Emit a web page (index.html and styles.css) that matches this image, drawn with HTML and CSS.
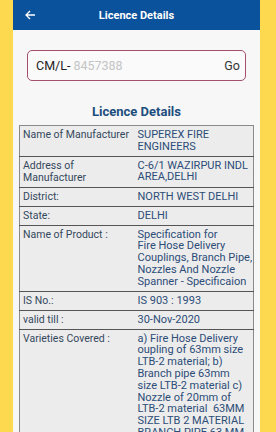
FILE: index.html
```html
<!DOCTYPE html>
<html lang="en">
<head>
    <meta charset="UTF-8">
    <meta name="viewport" content="width=device-width, initial-scale=1.0">
    <title>Licence Details</title>
    <link rel="stylesheet" href="styles.css">
</head>
<body>
    <div class="screen">
        <header class="appbar">
            <span class="back">
                <svg width="11" height="10" viewBox="0 0 11 10"><path d="M10 5H1.5M5 1L1 5l4 4" fill="none" stroke="#fff" stroke-width="1.3"/></svg>
            </span>
            <span class="title">Licence Details</span>
        </header>

        <form class="search">
            <span class="prefix">CM/L-</span>
            <input type="text" placeholder="8457388">
            <button type="button">Go</button>
        </form>

        <h2>Licence Details</h2>

        <table class="details">
            <colgroup><col class="c1"><col class="c2"></colgroup>
            <tr><td>Name of Manufacturer</td><td>SUPEREX FIRE ENGINEERS</td></tr>
            <tr><td>Address of Manufacturer</td><td>C-6/1 WAZIRPUR INDL AREA,DELHI</td></tr>
            <tr><td>District:</td><td>NORTH WEST DELHI</td></tr>
            <tr><td>State:</td><td>DELHI</td></tr>
            <tr><td>Name of Product :</td><td class="lines">Specification for<br>Fire Hose Delivery<br>Couplings, Branch Pipe,<br>Nozzles And Nozzle<br>Spanner - Specificaion</td></tr>
            <tr><td>IS No.:</td><td>IS 903 : 1993</td></tr>
            <tr><td>valid till :</td><td>30-Nov-2020</td></tr>
            <tr><td>Varieties Covered :</td><td>a) Fire Hose Delivery oupling of 63mm size LTB-2 material; b) Branch pipe 63mm size LTB-2 material c) Nozzle of 20mm of LTB-2 material&nbsp; 63MM SIZE LTB 2 MATERIAL BRANCH PIPE 63 MM</td></tr>
        </table>
    </div>
</body>
</html>
```

FILE: styles.css
```css
body {
    margin: 0;
    background: #fcd94f;
    font-family: Roboto, "Liberation Sans", sans-serif;
}
.screen {
    margin: 0 16px 0 13px;
    height: 432px;
    overflow: hidden;
    background: #f7f7f7;
}
.appbar {
    height: 30px;
    background: #0b529c;
    display: flex;
    align-items: center;
    position: relative;
}
.back {
    display: flex;
    margin-left: 12px;
}
.title {
    position: absolute;
    left: 0;
    right: 0;
    text-align: center;
    color: #fff;
    font-size: 11px;
    font-weight: bold;
}
.search {
    margin: 20px 14px 0 14px;
    height: 29px;
    border: 1.5px solid #a4506c;
    border-radius: 5px;
    background: #fafafa;
    display: flex;
    align-items: center;
    padding: 0 5px 0 8px;
}
.prefix {
    font-size: 12.5px;
    color: #222;
}
.search input {
    flex: 1;
    min-width: 0;
    border: none;
    background: none;
    padding: 0 0 0 3px;
    font-family: inherit;
    font-size: 12.5px;
}
.search input::placeholder {
    color: #c4c4c4;
}
.search button {
    border: none;
    background: none;
    padding: 0;
    font-family: inherit;
    font-size: 12.5px;
    color: #333;
}
h2 {
    margin: 23px 0 5px;
    text-align: center;
    font-size: 13px;
    line-height: 16px;
    color: #1d4e7e;
}
.details {
    margin: 0 6px;
    width: 235px;
    table-layout: fixed;
    border-collapse: collapse;
    background: #ececec;
    border: 1px solid #8a8a8a;
    font-size: 10.5px;
    line-height: 12px;
}
.c1 {
    width: 118px;
}
.details tr {
    border-bottom: 1px solid #555;
}
.details td {
    vertical-align: top;
    padding: 3px;
    color: #34485c;
}
.details td + td {
    padding-left: 0;
    font-size: 11px;
    line-height: 11.8px;
    color: #2c4d78;
}
.details td.lines {
    white-space: nowrap;
}
```
